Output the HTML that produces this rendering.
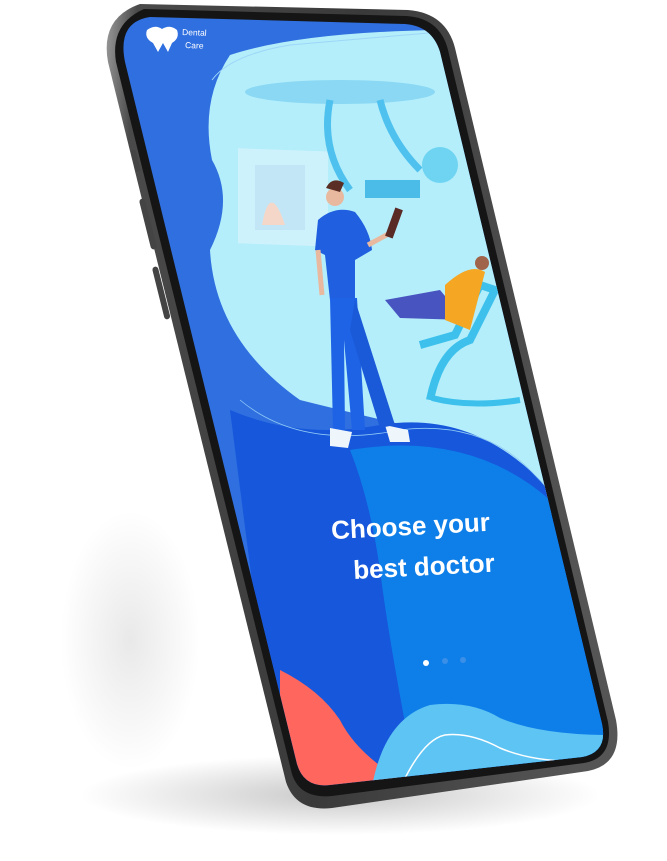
<!DOCTYPE html>
<html><head><meta charset="utf-8"><style>
html,body{margin:0;padding:0;background:#fff;width:667px;height:861px;overflow:hidden}
svg{display:block}
text{font-family:"Liberation Sans",sans-serif;font-weight:bold;fill:#fff}
</style></head><body>
<svg width="667" height="861" viewBox="0 0 667 861">
<defs>
<radialGradient id="sh" cx="0.5" cy="0.5" r="0.5"><stop offset="0" stop-color="#000" stop-opacity="0.22"/><stop offset="1" stop-color="#000" stop-opacity="0"/></radialGradient>
<linearGradient id="body" x1="0" y1="0" x2="1" y2="0.1"><stop offset="0" stop-color="#9a9a9a"/><stop offset="0.06" stop-color="#4a4a4a"/><stop offset="0.5" stop-color="#3a3a3a"/><stop offset="1" stop-color="#555"/></linearGradient>
<clipPath id="scr"><path d="M150,17 L405,24 Q432,26 440,52 L602,724 Q608,752 582,757 L330,785 Q304,788 297,764 L125,62 Q117,22 150,17 Z"/></clipPath>
</defs>
<ellipse cx="340" cy="795" rx="260" ry="40" fill="url(#sh)"/>
<ellipse cx="130" cy="640" rx="70" ry="130" fill="url(#sh)" opacity="0.4"/>
<path d="M140,4 L408,10 Q446,13 455,48 L616,720 Q624,764 588,771 L332,808 Q296,812 286,782 L108,62 Q100,18 140,4 Z" fill="url(#body)"/>
<path d="M144,9 L406,16 Q440,18 448,50 L608,722 Q614,758 584,763 L332,796 Q300,799 292,774 L116,62 Q110,24 144,9 Z" fill="#151515"/>
<rect x="133" y="150" width="5" height="22" rx="2" fill="#444" transform="rotate(-14 135 160)"/>
<rect x="145" y="198" width="6" height="52" rx="3" fill="#444" transform="rotate(-14 148 224)"/>
<rect x="158" y="266" width="6" height="54" rx="3" fill="#444" transform="rotate(-14 161 292)"/>
<g clip-path="url(#scr)">
<rect x="0" y="0" width="667" height="861" fill="#2f6fe0"/>
<path d="M230,55 Q300,32 440,30 L620,30 L640,600 Q560,520 470,440 Q380,420 300,400 Q215,340 210,250 Q235,200 212,160 Q200,100 230,55 Z" fill="#b4eefb"/>
<path d="M230,410 Q300,440 380,425 Q470,410 540,480 Q600,560 620,620 L620,800 L280,800 Z" fill="#1657dc"/>
<path d="M350,450 Q470,430 550,500 Q610,560 620,620 L620,800 L420,800 Q390,650 380,570 Q370,500 350,450 Z" fill="#0e7fe9"/>
<path d="M280,670 Q320,690 340,720 Q360,760 420,790 L280,800 Z" fill="#fe665e"/>
<path d="M370,800 Q380,720 430,705 Q470,700 500,718 Q540,735 610,735 L620,800 Z" fill="#5ec4f3"/>
<path d="M395,800 Q420,740 445,735 Q470,732 500,748 Q540,765 600,760" fill="none" stroke="#fff" stroke-width="1.5"/>
<path d="M212,80 Q230,55 290,45 L440,32" fill="none" stroke="#9dd6f7" stroke-width="1"/>
<path d="M240,400 Q300,450 400,430 Q480,420 530,470 Q570,510 600,560" fill="none" stroke="#8fc9f5" stroke-width="0.8"/>
<ellipse cx="340" cy="92" rx="95" ry="12" fill="#7fd2f3" opacity="0.8"/>
<rect x="238" y="140" width="90" height="95" fill="#d5f3fb" opacity="0.8" transform="skewY(2)"/>
<rect x="255" y="165" width="50" height="65" fill="#c3e6f6"/>
<path d="M262,225 Q270,180 285,225 Z" fill="#f4d7c9"/>
<path d="M330,100 Q320,150 350,190" fill="none" stroke="#4fc1ee" stroke-width="7"/>
<path d="M380,100 Q390,140 420,170" fill="none" stroke="#4fc1ee" stroke-width="7"/>
<rect x="365" y="180" width="55" height="18" fill="#4bbbe7"/>
<circle cx="440" cy="165" r="18" fill="#6fd4f2"/>
<path d="M430,400 Q440,350 470,340 L495,290 L480,285 L455,335 L420,345" fill="none" stroke="#3dc1ec" stroke-width="8"/>
<path d="M432,398 Q470,408 520,400" fill="none" stroke="#3dc1ec" stroke-width="6"/>
<path d="M385,300 L440,290 L465,320 L400,318 Z" fill="#4854c0"/>
<path d="M445,285 Q470,262 485,272 L470,330 L445,320 Z" fill="#f5a623"/>
<circle cx="482" cy="263" r="7" fill="#a0644a"/>
<circle cx="335" cy="197" r="9" fill="#e9b99f"/>
<path d="M326,188 Q332,176 344,183 L340,192 Z" fill="#5a2e24"/>
<path d="M318,220 Q335,205 355,212 Q370,230 372,250 L355,260 L355,300 L330,300 L325,255 L315,250 Z" fill="#1f5fe0"/>
<path d="M368,245 L392,232" stroke="#e9b99f" stroke-width="5"/>
<rect x="390" y="208" width="8" height="30" fill="#5a2a25" transform="rotate(20 394 223)"/>
<path d="M330,298 L357,298 L365,430 L352,430 L344,340 L345,430 L333,430 Z" fill="#1e63e6"/>
<path d="M330,428 L352,432 L348,448 L330,446 Z" fill="#eef6fb"/>
<path d="M385,425 L408,430 L410,442 L390,442 Z" fill="#eef6fb"/>
<path d="M355,300 L395,425 L380,428 L350,330 Z" fill="#1a5ad8"/>
<path d="M318,250 L322,295" stroke="#e9b99f" stroke-width="5"/>
<path d="M147,30 Q155,24 162,29 Q170,24 177,30 Q180,38 172,43 L168,52 L163,43 L158,52 L153,43 Q144,38 147,30 Z" fill="#fff"/>
<text x="182" y="35" font-size="8.5" style="font-weight:normal" transform="rotate(2 182 35)">Dental</text>
<text x="185" y="48" font-size="8.5" style="font-weight:normal" transform="rotate(2 185 48)">Care</text>
<g transform="rotate(-3 410 545)">
<text x="332" y="535" font-size="26">Choose your</text>
<text x="352" y="576" font-size="26">best doctor</text>
</g>
<circle cx="426" cy="663" r="3" fill="#fff"/>
<circle cx="445" cy="661" r="3" fill="#3a8fe8"/>
<circle cx="463" cy="660" r="3" fill="#3a8fe8"/>
</g>
</svg>
</body></html>
